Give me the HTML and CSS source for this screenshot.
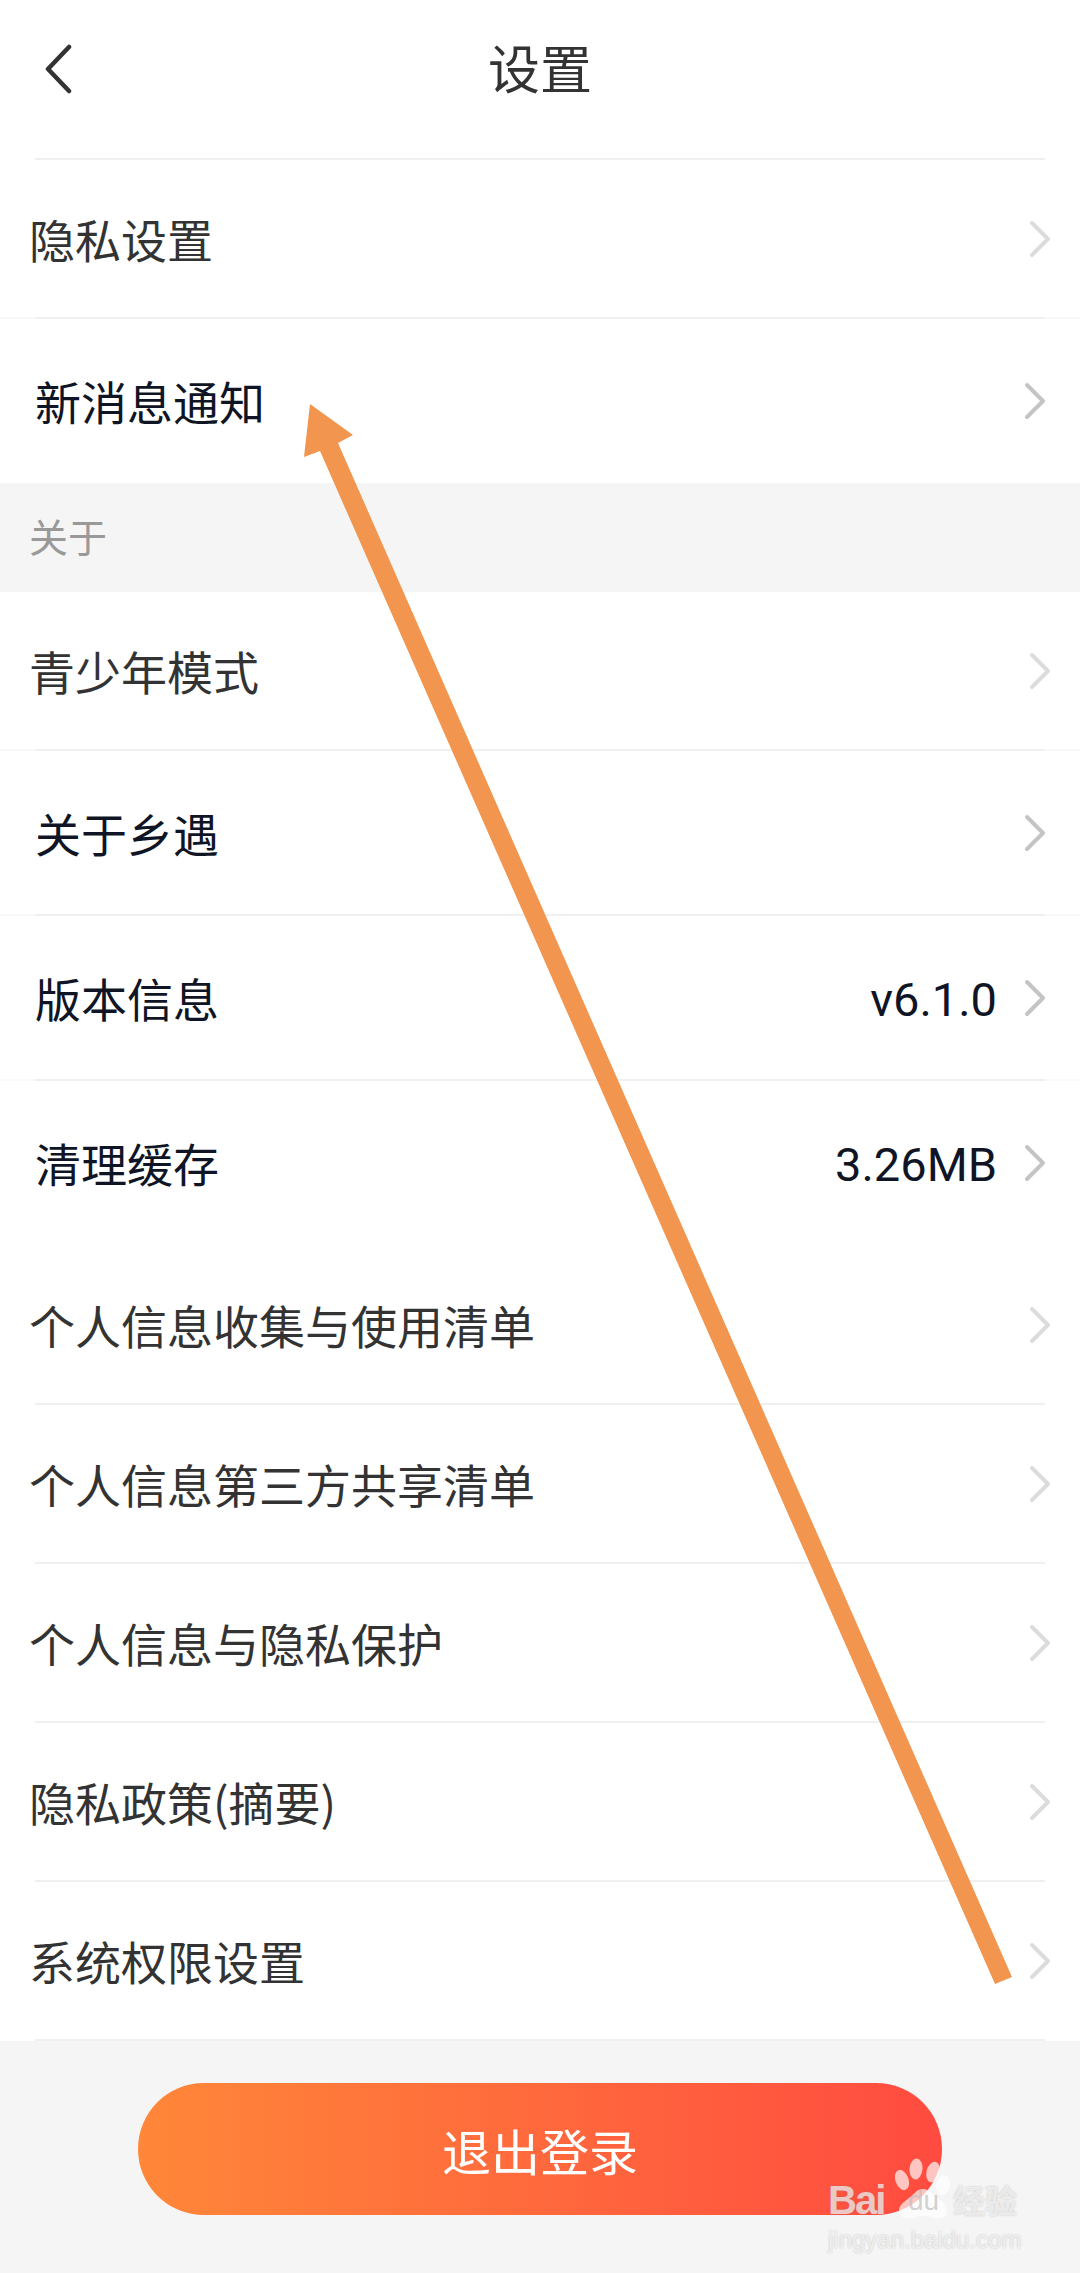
FILE: index.html
```html
<!DOCTYPE html>
<html lang="zh-CN">
<head>
  <meta charset="UTF-8" />
  <meta name="viewport" content="width=device-width, initial-scale=1" />
  <title>设置</title>
  <link rel="stylesheet" href="styles.css">
</head>
<body>
  <svg class="defs" aria-hidden="true">
    <symbol id="chevron" viewBox="0 0 22 38">
      <path d="M3 3l16 16L3 35" fill="none" stroke="currentColor" stroke-width="4" stroke-linecap="round" stroke-linejoin="round"/>
    </symbol>
  </svg>

  <main class="page">
    <header class="topbar">
      <button class="back" type="button" aria-label="返回">
        <svg viewBox="0 0 28 50" width="28" height="50" aria-hidden="true">
          <path d="M25 3L4 25l21 22" fill="none" stroke="currentColor" stroke-width="4.5" stroke-linecap="round" stroke-linejoin="round"/>
        </svg>
      </button>
      <h1>设置</h1>
    </header>
    <hr class="rule rule-short">

    <a class="row">
      <span class="row-label">隐私设置</span>
      <svg class="chev"><use href="#chevron"/></svg>
    </a>
    <hr class="rule rule-wide">
    <a class="row row-alt row-end">
      <span class="row-label">新消息通知</span>
      <svg class="chev"><use href="#chevron"/></svg>
    </a>

    <h2 class="section-title">关于</h2>

    <a class="row">
      <span class="row-label">青少年模式</span>
      <svg class="chev"><use href="#chevron"/></svg>
    </a>
    <hr class="rule rule-wide">
    <a class="row row-alt">
      <span class="row-label">关于乡遇</span>
      <svg class="chev"><use href="#chevron"/></svg>
    </a>
    <hr class="rule rule-wide">
    <a class="row row-alt">
      <span class="row-label">版本信息</span>
      <span class="row-value">v6.1.0</span>
      <svg class="chev"><use href="#chevron"/></svg>
    </a>
    <hr class="rule rule-wide">
    <a class="row row-alt">
      <span class="row-label">清理缓存</span>
      <span class="row-value">3.26MB</span>
      <svg class="chev"><use href="#chevron"/></svg>
    </a>
    <hr class="rule rule-none">
    <a class="row">
      <span class="row-label">个人信息收集与使用清单</span>
      <svg class="chev"><use href="#chevron"/></svg>
    </a>
    <hr class="rule rule-short">
    <a class="row">
      <span class="row-label">个人信息第三方共享清单</span>
      <svg class="chev"><use href="#chevron"/></svg>
    </a>
    <hr class="rule rule-short">
    <a class="row">
      <span class="row-label">个人信息与隐私保护</span>
      <svg class="chev"><use href="#chevron"/></svg>
    </a>
    <hr class="rule rule-short">
    <a class="row">
      <span class="row-label">隐私政策(摘要)</span>
      <svg class="chev"><use href="#chevron"/></svg>
    </a>
    <hr class="rule rule-short">
    <a class="row">
      <span class="row-label">系统权限设置</span>
      <svg class="chev"><use href="#chevron"/></svg>
    </a>
    <hr class="rule rule-short">

    <footer class="bottom">
      <button class="logout" type="button">退出登录</button>
    </footer>

    <!-- annotation drawn over the screenshot -->
    <svg class="annotation" viewBox="0 0 1080 2273" aria-hidden="true">
      <polygon points="310,404 353,435 338,443 1012,1977 995,1984 320,451 304,457" fill="#f2954e"/>
    </svg>

    <div class="watermark" aria-hidden="true">
      <div class="wm-top">
        <span class="wm-bai">Bai</span>
        <span class="wm-paw">
          <svg viewBox="0 0 55 62" width="55" height="62">
            <g fill="#fff" fill-opacity="0.68">
              <ellipse cx="7" cy="22" rx="6.500" ry="10.500" transform="rotate(-20 7 22)"/>
              <ellipse cx="21" cy="11" rx="6.500" ry="10.500" transform="rotate(5 21 11)"/>
              <ellipse cx="38" cy="14" rx="6.500" ry="10.500" transform="rotate(15 38 14)"/>
              <ellipse cx="48" cy="27" rx="7" ry="10" transform="rotate(10 48 27)"/>
              <path d="M28 31c6 0 9 5 14 9 6 4 10 8 10 13 0 6-6 8-11 7-5 0-8-2-13-2s-8 2-13 2c-6 1-11-2-11-7 0-6 5-9 10-13 5-3 7-9 14-9z"/>
            </g>
          </svg>
          <span class="wm-du">du</span>
        </span>
        <span class="wm-jy">经验</span>
      </div>
      <div class="wm-url">jingyan.baidu.com</div>
    </div>
  </main>
</body>
</html>
```

FILE: styles.css
```css
:root {
  --color-bg: #ffffff;
  --color-grey: #f5f5f5;
  --color-rule: #f0f0f0;
  --color-text: #333333;
  --color-text-alt: #0f1524;
  --font-cjk: "Noto Sans CJK SC", "Noto Sans", sans-serif;
}

* {
  box-sizing: border-box;
}

html,
body {
  margin: 0;
  padding: 0;
}

body {
  background: var(--color-grey);
  color: var(--color-text);
  font-family: var(--font-cjk);
}

.defs {
  display: none;
}

.page {
  position: relative;
  width: 1080px;
  height: 2273px;
  overflow: hidden;
}

/* header */
.topbar {
  display: flex;
  align-items: center;
  justify-content: center;
  position: relative;
  height: 158px;
  padding-bottom: 24px;
  background: var(--color-bg);
}

.back {
  position: absolute;
  left: 44px;
  top: 44px;
  display: flex;
  padding: 0;
  border: none;
  background: none;
  color: var(--color-text);
}

h1 {
  margin: 0;
  font-size: 52px;
  font-weight: 400;
  line-height: 60px;
}

/* list rows */
.row {
  display: flex;
  align-items: center;
  height: 157px;
  padding: 0 29px;
  background: var(--color-bg);
}

.row-label {
  flex: 1;
  margin-bottom: 2px;
  font-size: 46px;
  line-height: 60px;
}

.row-value {
  font-family: Roboto, sans-serif;
  font-size: 47px;
  line-height: 60px;
  margin-top: 5px;
  margin-right: 27px;
  color: var(--color-text-alt);
}

.chev {
  width: 22px;
  height: 38px;
  color: #dcdcdc;
  flex: none;
}

.row-alt {
  height: 163px;
  padding: 0 34px 0 35px;
  color: var(--color-text-alt);
}

.row-end {
  height: 164px;
}

.row-alt .chev {
  color: #c4c4c4;
}

.rule {
  display: block;
  height: 2px;
  margin: 0;
  border-style: solid;
  border-color: var(--color-bg);
  border-width: 0 35px;
  background: var(--color-rule);
}

.rule-wide {
  border-color: #f9f9f9;
}

.rule-none {
  border-width: 0;
  background: var(--color-bg);
}

.section-title {
  margin: 0;
  height: 109px;
  padding-left: 29px;
  padding-bottom: 6px;
  display: flex;
  align-items: center;
  font-size: 39px;
  font-weight: 400;
  color: #999999;
  background: var(--color-grey);
}

/* bottom button */
.bottom {
  display: flex;
  justify-content: center;
  padding-top: 42px;
}

.logout {
  width: 804px;
  height: 132px;
  border: none;
  border-radius: 66px;
  font-family: var(--font-cjk);
  font-size: 49px;
  color: #ffffff;
  background: linear-gradient(90deg, #ff8739, #ff4b40);
}

/* overlays */
.annotation {
  position: absolute;
  left: 0;
  top: 0;
  width: 1080px;
  height: 2273px;
  pointer-events: none;
}

.watermark {
  position: absolute;
  left: 828px;
  top: 2158px;
  width: 200px;
  color: rgba(255, 255, 255, 0.68);
  text-shadow: 0 0 2px rgba(120, 120, 120, 0.45);
}

.wm-top {
  display: flex;
  align-items: flex-end;
  height: 62px;
}

.wm-bai {
  font-family: "Liberation Sans", sans-serif;
  font-size: 40px;
  font-weight: 700;
  letter-spacing: -2px;
  line-height: 40px;
  width: 67px;
  flex: none;
}

.wm-paw {
  position: relative;
  display: block;
  width: 55px;
  height: 62px;
  flex: none;
}

.wm-du {
  position: absolute;
  left: 13px;
  bottom: 4px;
  font-family: "Liberation Sans", sans-serif;
  font-size: 28px;
  line-height: 30px;
  color: rgba(190, 190, 190, 0.7);
  text-shadow: none;
}

.wm-jy {
  font-size: 32px;
  font-weight: 700;
  line-height: 42px;
  margin-left: 3px;
}

.wm-url {
  margin-top: 5px;
  font-family: "Liberation Sans", sans-serif;
  font-size: 24px;
  line-height: 30px;
}
```
